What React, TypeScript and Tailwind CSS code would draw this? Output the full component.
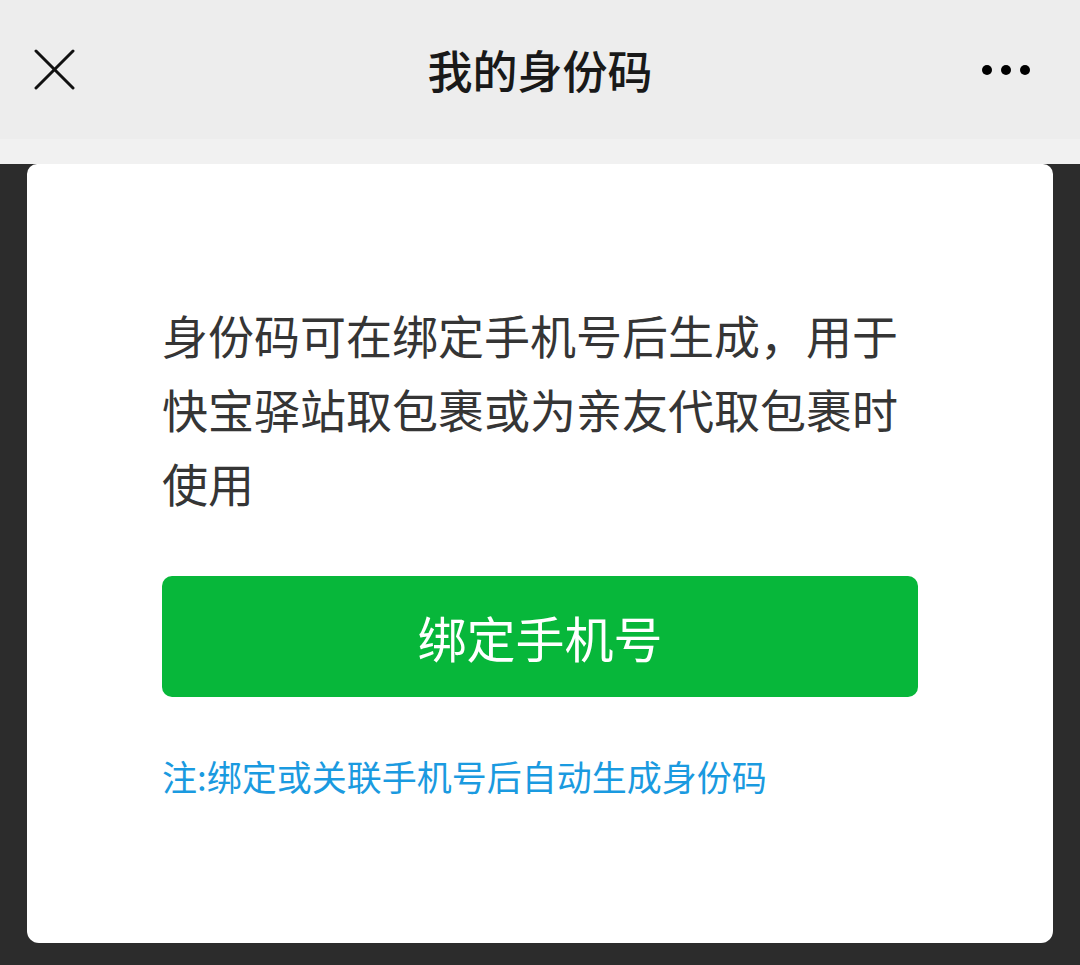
export default function App() {
  return (
    <div
      className="w-[1080px] h-[965px] bg-[#2c2c2c] flex flex-col overflow-hidden"
      style={{ fontFamily: '"Noto Sans CJK SC", "Noto Sans", sans-serif' }}
    >
      {/* 顶部导航 */}
      <div className="h-[139px] bg-[#ededed] grid grid-cols-[1fr_auto_1fr] items-center shrink-0">
        <div className="pl-[34px] flex items-center">
          <svg width="41" height="41" viewBox="0 0 41 41" fill="none" stroke="#111" strokeWidth="3" strokeLinecap="round">
            <line x1="2" y1="2" x2="39" y2="39" />
            <line x1="39" y1="2" x2="2" y2="39" />
          </svg>
        </div>
        <div className="text-[45px] font-medium text-[#191919] leading-none">我的身份码</div>
        <div className="flex items-center justify-end gap-[9px] pr-[50px]">
          <span className="w-[10px] h-[10px] rounded-full bg-black" />
          <span className="w-[10px] h-[10px] rounded-full bg-black" />
          <span className="w-[10px] h-[10px] rounded-full bg-black" />
        </div>
      </div>
      <div className="h-[25px] bg-[#f1f1f1] shrink-0" />

      {/* 卡片 */}
      <div className="mx-[27px] h-[779px] bg-white rounded-b-[12px] rounded-t-[10px] px-[135px] pt-[133px] shrink-0">
        <p className="text-[46px] leading-[74px] text-[#353535]">
          身份码可在绑定手机号后生成，用于快宝驿站取包裹或为亲友代取包裹时使用
        </p>
        <button className="mt-[57px] w-full h-[121px] bg-[#07b73a] rounded-[10px] text-white text-[49px] flex items-center justify-center">
          绑定手机号
        </button>
        <p className="mt-[59px] text-[35px] leading-[40px] text-[#1a9ae0]">
          注:绑定或关联手机号后自动生成身份码
        </p>
      </div>
    </div>
  );
}
